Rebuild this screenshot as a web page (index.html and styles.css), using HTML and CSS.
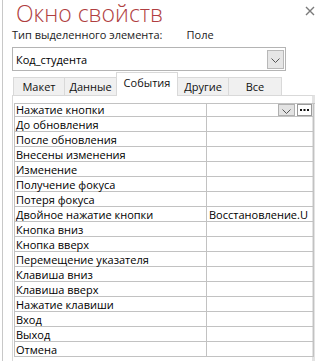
FILE: index.html
```html
<!DOCTYPE html>
<html lang="ru">
<head>
<meta charset="utf-8">
<link rel="stylesheet" href="styles.css">
</head>
<body>
<div class="pane">
  <div class="head">
    <h1 class="title">Окно свойств</h1>
    <svg class="close" width="10" height="10" viewBox="0 0 10 10"><path d="M1 1L9 9M9 1L1 9" stroke="#7a7a7a" stroke-width="1.4" fill="none"/></svg>
  </div>
  <div class="kind"><span>Тип выделенного элемента:</span><span class="kind-val">Поле</span></div>
  <div class="combo">
    <span class="combo-text">Код_студента</span>
    <span class="combo-btn"><svg width="9" height="5" viewBox="0 0 9 5"><path d="M0.5 0.5L4.5 4.5L8.5 0.5" stroke="#555" stroke-width="1" fill="none"/></svg></span>
  </div>
  <div class="tabs">
    <div class="tab w1">Макет</div>
    <div class="tab w2">Данные</div>
    <div class="tab sel w3">События</div>
    <div class="tab w4">Другие</div>
    <div class="tab w5">Все</div>
  </div>
  <div class="panel">
    <div class="props">
      <div class="c k first">Нажатие кнопки</div>
      <div class="c v first"><span class="btns"><span class="dd"><svg width="9" height="5" viewBox="0 0 9 5"><path d="M0.5 0.5L4.5 4.5L8.5 0.5" stroke="#555" stroke-width="1" fill="none"/></svg></span><span class="dots"><svg width="9" height="3" viewBox="0 0 9 3"><rect x="0" y="0" width="2" height="2" fill="#111"/><rect x="3.5" y="0" width="2" height="2" fill="#111"/><rect x="7" y="0" width="2" height="2" fill="#111"/></svg></span></span></div>
      <div class="c k">До обновления</div><div class="c v"></div>
      <div class="c k">После обновления</div><div class="c v"></div>
      <div class="c k">Внесены изменения</div><div class="c v"></div>
      <div class="c k">Изменение</div><div class="c v"></div>
      <div class="c k">Получение фокуса</div><div class="c v"></div>
      <div class="c k">Потеря фокуса</div><div class="c v"></div>
      <div class="c k">Двойное нажатие кнопки</div><div class="c v">Восстановление.U</div>
      <div class="c k">Кнопка вниз</div><div class="c v"></div>
      <div class="c k">Кнопка вверх</div><div class="c v"></div>
      <div class="c k">Перемещение указателя</div><div class="c v"></div>
      <div class="c k">Клавиша вниз</div><div class="c v"></div>
      <div class="c k">Клавиша вверх</div><div class="c v"></div>
      <div class="c k">Нажатие клавиши</div><div class="c v"></div>
      <div class="c k">Вход</div><div class="c v"></div>
      <div class="c k">Выход</div><div class="c v"></div>
      <div class="c k">Отмена</div><div class="c v"></div>
    </div>
  </div>
</div>
</body>
</html>
```
FILE: styles.css
```css
html, body {
  margin: 0;
  padding: 0;
  background: #ffffff;
}
body {
  font-family: "Open Sans", "Noto Sans", sans-serif;
  font-size: 11px;
  color: #000;
  width: 320px;
  height: 361px;
  overflow: hidden;
}
.pane {
  margin-left: 2px;
  border-left: 1px solid #c8c8c8;
  height: 361px;
  padding-left: 9px;
  box-sizing: border-box;
}
.head {
  display: flex;
  justify-content: space-between;
  align-items: flex-start;
  height: 27px;
}
.title {
  margin: 0 0 0 4px;
  font-size: 23px;
  font-weight: 300;
  line-height: 27px;
  color: #b03e41;
}
.close {
  margin: 6px 5px 0 0;
}
.kind {
  display: flex;
  line-height: 16px;
  height: 16px;
  color: #222;
}
.kind-val {
  margin-left: 24px;
}
.combo {
  margin-top: 4px;
  width: 274px;
  height: 24px;
  box-sizing: border-box;
  border: 1px solid #b4b4b4;
  display: flex;
  align-items: center;
  justify-content: space-between;
  padding-left: 3px;
}
.combo-btn {
  width: 17px;
  height: 19px;
  box-sizing: border-box;
  border: 1px solid #b8b8b8;
  background: #e6e6e6;
  margin-right: 1px;
  display: flex;
  align-items: center;
  justify-content: center;
  padding-top: 2px;
}
.tabs {
  display: flex;
  align-items: flex-end;
  height: 24px;
  margin-left: 1px;
}
.tab {
  height: 18px;
  box-sizing: border-box;
  border: 1px solid #d9d9d9;
  border-bottom: none;
  border-left: none;
  background: #f0f0f0;
  text-align: center;
  line-height: 18px;
  color: #111;
}
.tab.w1 { width: 52px; border-left: 1px solid #d9d9d9; }
.tab.w2 { width: 52px; }
.tab.w3 { width: 62px; }
.tab.w4 { width: 51px; }
.tab.w5 { width: 53px; }
.tab.sel {
  height: 24px;
  background: #ffffff;
  line-height: 19px;
  margin-bottom: -1px;
  position: relative;
  border-left: 1px solid #d9d9d9;
  margin-left: -1px;
}
.panel {
  width: 303px;
  height: 266px;
  box-sizing: border-box;
  border: 1px solid #d9d9d9;
  border-bottom: none;
  border-right: 3px solid #e3e3e3;
  padding: 7px 0 0 1px;
}
.props {
  display: grid;
  grid-template-columns: 192px 107px;
  border-top: 1px solid #c2c2c2;
  border-left: 1px solid #c2c2c2;
  width: 300px;
}
.c {
  height: 15px;
  box-sizing: border-box;
  border-right: 1px solid #c2c2c2;
  border-bottom: 1px solid #c2c2c2;
  line-height: 13px;
  padding-top: 1px;
  padding-left: 1px;
  white-space: nowrap;
}
.c.first {
  height: 13px;
  line-height: 12px;
  padding-top: 0;
}
.c.v {
  padding-left: 2px;
  position: relative;
  overflow: hidden;
}
.btns {
  position: absolute;
  right: 1px;
  top: 0;
  display: flex;
  gap: 2px;
}
.dd {
  width: 17px;
  height: 12px;
  box-sizing: border-box;
  background: #e3e3e3;
  border: 1px solid #b0b0b0;
  display: flex;
  align-items: flex-end;
  justify-content: center;
  padding-bottom: 1px;
}
.dots {
  width: 15px;
  height: 12px;
  box-sizing: border-box;
  border: 1px solid #9a9a9a;
  background: #fff;
  display: flex;
  align-items: center;
  justify-content: center;
}
.dots svg {
  display: block;
}
```
